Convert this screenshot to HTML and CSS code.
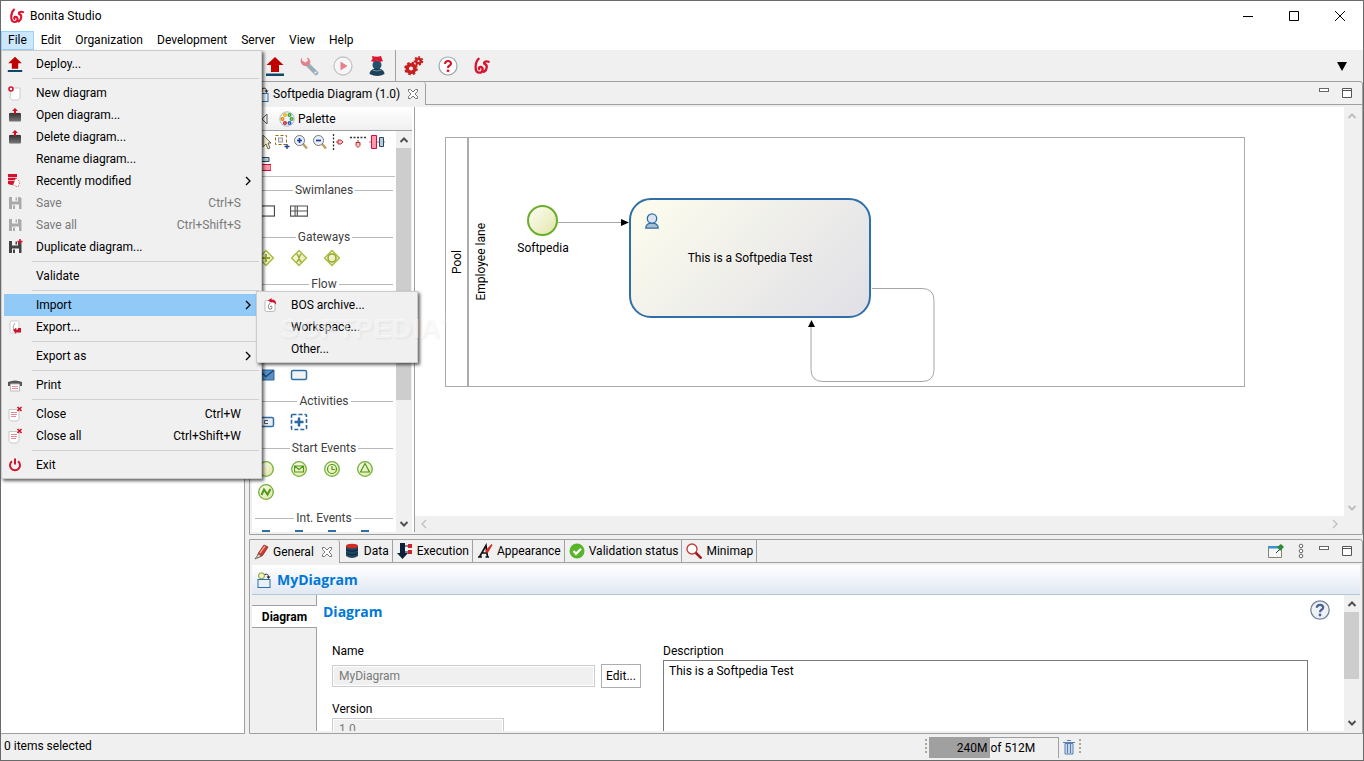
FILE: index.html
```html
<!DOCTYPE html>
<html lang="en">
<head>
    <meta charset="UTF-8">
    <meta name="viewport" content="width=device-width, initial-scale=1.0">
    <title>Bonita Studio</title>
    <link rel="stylesheet" href="styles.css">
</head>
<body>

<!-- Shared icons -->
<svg class="defs" width="0" height="0" aria-hidden="true">
    <defs>
        <linearGradient id="green" x1="0" y1="0" x2="1" y2="1"><stop offset="0" stop-color="#fdfef2"/><stop offset="1" stop-color="#dfe5a0"/></linearGradient>
        <linearGradient id="dark" x1="0" y1="0" x2="0" y2="1"><stop offset="0" stop-color="#333"/><stop offset="1" stop-color="#777"/></linearGradient>
    </defs>
    <symbol id="logo" viewBox="0 0 16 16"><path d="M5 1.500C1.500 5 1 14 5.500 14c3.800 0 4-5.200 1-5.200-1.300 0-1.500 1.300-1 2M14 4.200c-2.500-1-5 .3-3.800 1.900 3 .6 2.600 5.200-.4 7.200" fill="none" stroke="#d9122f" stroke-width="2.100" stroke-linecap="round"/></symbol>
    <symbol id="deploy" viewBox="0 0 20 20"><path d="M10 1l8.500 8H14v7H6V9H1.500z" fill="#c00000"/><path d="M1 17.500h18v2.500H1z" fill="#0b4a6b"/></symbol>
    <symbol id="chev" viewBox="0 0 10 10"><path d="M3 1l4 4-4 4" fill="none" stroke="currentColor" stroke-width="1.300"/></symbol>
    <symbol id="up" viewBox="0 0 10 10"><path d="M1.500 7L5 3.500 8.500 7" fill="none" stroke="currentColor" stroke-width="2"/></symbol>
    <symbol id="down" viewBox="0 0 10 10"><path d="M1.500 3L5 6.500 8.500 3" fill="none" stroke="currentColor" stroke-width="2"/></symbol>
    <symbol id="tabclose" viewBox="0 0 12 12"><path d="M1.500 1.500h2L6 4l2.500-2.500h2v2L8 6l2.500 2.500v2h-2L6 8l-2.500 2.500h-2v-2L4 6 1.500 3.500z" fill="#fff" stroke="#777"/></symbol>
    <symbol id="folder" viewBox="0 0 16 16"><path d="M2.500 6.500l1-2h9l1 2v8h-11z" fill="#ddd"/><rect x="2" y="6" width="12" height="8.500" rx="1" fill="url(#dark)"/><path d="M8 1l3 3H9v3H7V4H5z" fill="#d01020"/></symbol>
    <symbol id="floppy" viewBox="0 0 16 16"><path d="M2 2h11l1.500 1.500V14H2z" fill="currentColor"/><path d="M5 2h6v4.500H5zM5 9.500h7V14H5z" fill="#f4f4f4"/><path d="M8.500 2.500h1.500v3H8.500zM6 10.500h2V14H6z" fill="currentColor"/></symbol>
    <symbol id="closedoc" viewBox="0 0 16 16"><path d="M2 3.500h10V13l-2 2H4l-2-2z" fill="#fff" stroke="#c8c8c8"/><path d="M4 6.500h6M4 8.500h6M4 10.500h5" stroke="#e48b97"/><path d="M10.500 1l4 4M14.500 1l-4 4" stroke="#d01020" stroke-width="1.600"/></symbol>
    <symbol id="pool" viewBox="0 0 16 12"><rect x=".5" y="1.500" width="15" height="9" fill="#fff" stroke="#444"/></symbol>
    <symbol id="lane" viewBox="0 0 16 12"><path d="M.5 1.500h15v9H.5zM4.500 1.500v9M6.500 1.500v9M.5 6h15" fill="none" stroke="#555"/></symbol>
    <symbol id="diamond" viewBox="0 0 18 18"><path d="M9 1.500L16.500 9 9 16.500 1.500 9z" fill="url(#green)" stroke="#a9b83c" stroke-width="1.300"/></symbol>
    <symbol id="event" viewBox="0 0 18 18"><circle cx="9" cy="9" r="7.300" fill="url(#green)" stroke="#71b03a" stroke-width="1.300"/></symbol>
    <symbol id="diagram" viewBox="0 0 14 16"><rect x="1" y="7.500" width="12" height="8" fill="#e8f2fb" stroke="#2f6fa8"/><circle cx="4.500" cy="3.800" r="3" fill="#f1f2b8" stroke="#8a9432"/><path d="M7.500 2.500q4-1.500 4 3" fill="none" stroke="#222"/><path d="M9.500 4.500h4l-2 2.500z" fill="#222"/></symbol>
    <symbol id="min" viewBox="0 0 12 12"><rect x="1.500" y="1.500" width="9" height="3" fill="#fff" stroke="#666"/></symbol>
    <symbol id="max" viewBox="0 0 12 12"><path d="M1.500 1.500h9v9h-9zM1.500 3.500h9" fill="#fff" stroke="#555"/></symbol>
</svg>

<!-- Title bar -->
<header class="titlebar">
    <svg class="app-icon"><use href="#logo"/></svg>
    <span class="app-title">Bonita Studio</span>
    <div class="window-buttons">
        <button aria-label="Minimize"><svg viewBox="0 0 12 12"><path d="M1 6.500h10" stroke="#000"/></svg></button>
        <button aria-label="Maximize"><svg viewBox="0 0 12 12"><path d="M1.500 1.500h9v9h-9z" fill="none" stroke="#000"/></svg></button>
        <button aria-label="Close"><svg viewBox="0 0 12 12"><path d="M1 1l10 10M11 1L1 11" stroke="#000"/></svg></button>
    </div>
</header>

<!-- Menu bar -->
<nav class="menubar">
    <button class="open">File</button>
    <button>Edit</button>
    <button>Organization</button>
    <button>Development</button>
    <button>Server</button>
    <button>View</button>
    <button>Help</button>
</nav>

<!-- Toolbar -->
<div class="toolbar">
    <button aria-label="Deploy"><svg viewBox="0 0 20 20"><use href="#deploy"/></svg></button>
    <button aria-label="Configure" class="off"><svg viewBox="0 0 20 20"><path d="M9 9l8 8" stroke="#4b6b85" stroke-width="4.500" stroke-linecap="round"/><path d="M3 1.500A5 5 0 1 0 11.500 6L10 2.500 8 1.500l1 3.500-3 1.500-3-2z" fill="#d8142c"/><circle cx="16.500" cy="16.500" r="1" fill="#fff"/></svg></button>
    <button aria-label="Run" class="off"><svg viewBox="0 0 20 20"><circle cx="10" cy="10" r="9" fill="#fff" stroke="#999" stroke-width="1.300"/><path d="M7.500 5.500v9l7-4.500z" fill="#e0102c"/></svg></button>
    <button aria-label="Portal"><svg viewBox="0 0 20 20"><circle cx="10" cy="9" r="4.500" fill="#24506c"/><path d="M2.500 18q0-4 5-5.500h5q5 1.500 5 5.500-7 4-15 0z" fill="#1c4059"/><path d="M5.500 14q4 2 9 0" stroke="#7090a5" fill="none"/><path d="M5 0q5 1.500 9 0l1 3 1 2-3 1-3-1.500L6.500 6 4 5l1.500-2z" fill="#e0142c"/></svg></button>
    <span class="toolbar-separator"></span>
    <button aria-label="Preferences"><svg viewBox="0 0 20 20"><circle cx="7" cy="12.500" r="3.800" fill="none" stroke="#c81e1e" stroke-width="3.500"/><circle cx="7" cy="12.500" r="5.800" fill="none" stroke="#c81e1e" stroke-width="2" stroke-dasharray="2.500 2.050"/><circle cx="14.500" cy="5" r="2.300" fill="none" stroke="#c81e1e" stroke-width="2.500"/><circle cx="14.500" cy="5" r="4" fill="none" stroke="#c81e1e" stroke-width="1.600" stroke-dasharray="2 1.600"/></svg></button>
    <button aria-label="Help"><svg viewBox="0 0 20 20"><circle cx="10" cy="10" r="9" fill="#fff" stroke="#98a4ae" stroke-width="1.200"/><path d="M7 7.800q.2-2.800 3-2.800t3 2.500q0 1.400-1.700 2.300-1.300.7-1.300 2.200" fill="none" stroke="#d8142c" stroke-width="2.200"/><circle cx="10" cy="14.800" r="1.400" fill="#d8142c"/></svg></button>
    <button aria-label="Bonita"><svg viewBox="-1 -1 18 18"><use href="#logo" width="16" height="16"/></svg></button>
    <button class="toolbar-more" aria-label="More"><svg viewBox="0 0 12 12"><path d="M1 2h10L6 11z"/></svg></button>
</div>

<!-- Workbench -->
<main class="workbench">
    <section class="explorer"></section>

    <div class="parts">
        <section class="part editor">
            <div class="tabs">
                <button class="tab active editor-tab"><svg class="i14"><use href="#diagram"/></svg>Softpedia Diagram (1.0)<svg class="tab-close"><use href="#tabclose"/></svg></button>
                <div class="tab-tools">
                    <button aria-label="Minimize editor"><svg><use href="#min"/></svg></button>
                    <button aria-label="Maximize editor"><svg><use href="#max"/></svg></button>
                </div>
            </div>
            <div class="editor-body">
                <aside class="palette">
                    <div class="palette-header">
                        <svg class="i12" viewBox="0 0 12 12"><path d="M8 1v10L3 6z" fill="#fff" stroke="#555"/></svg>
                        <svg class="i16" viewBox="0 0 16 16"><circle cx="8" cy="8" r="7.200" fill="#eef3fa" stroke="#a9b9d0"/><g fill="#fff" stroke-width="1.400"><circle cx="6" cy="4" r="1.300" stroke="#e8b400"/><circle cx="10.500" cy="4" r="1.300" stroke="#3da32c"/><circle cx="12.500" cy="8" r="1.300" stroke="#3da32c"/><circle cx="10.500" cy="12" r="1.300" stroke="#2858c8"/><circle cx="6" cy="12" r="1.300" stroke="#d02020"/><circle cx="3.500" cy="8" r="1.300" stroke="#e88400"/></g></svg>
                        <span>Palette</span>
                    </div>
                    <div class="palette-main">
                        <div class="palette-items">
                            <div class="palette-tools">
                                <svg class="i16" viewBox="0 0 16 16"><path d="M8 1v12l3-3 2 5 2-1-2-5h3z" fill="#f4f0dc" stroke="#6b6440"/></svg>
                                <svg class="i16" viewBox="0 0 16 16"><rect x="1.500" y="1.500" width="11" height="9" fill="none" stroke="#8a6d1a" stroke-dasharray="3 2"/><rect x="4.500" y="4" width="4" height="4" fill="#eee" stroke="#999"/><path d="M13 10v5M10.500 12.500h5" stroke="#1d3f86" stroke-width="1.300"/></svg>
                                <svg class="i16" viewBox="0 0 16 16"><path d="M10 10l4 4.500" stroke="#c0a060" stroke-width="2.500"/><circle cx="6.500" cy="6.500" r="5" fill="#eaf2ff" stroke="#777"/><path d="M4 6.500h5M6.500 4v5" stroke="#1c3c9c" stroke-width="1.700"/></svg>
                                <svg class="i16" viewBox="0 0 16 16"><path d="M10 10l4 4.500" stroke="#c0a060" stroke-width="2.500"/><circle cx="6.500" cy="6.500" r="5" fill="#eaf2ff" stroke="#777"/><path d="M4 6.500h5" stroke="#1c3c9c" stroke-width="1.700"/></svg>
                                <svg class="i16" viewBox="0 0 16 16"><path d="M2.500 0v16" stroke="#333" stroke-width="1.300" stroke-dasharray="2 1.500"/><path d="M5 8h2M7 6h3l2 2-2 2H7z" fill="#f6c4c4" stroke="#b83030"/></svg>
                                <svg class="i16" viewBox="0 0 16 16"><path d="M0 3.500h16" stroke="#333" stroke-width="1.300" stroke-dasharray="2 1.500"/><path d="M8 6v2M6 8.500h4v3l-2 2-2-2z" fill="#f6c4c4" stroke="#b83030"/></svg>
                                <svg class="i16" viewBox="0 0 16 16"><path d="M0 8h16" stroke="#888"/><path d="M2.500 1.500h5v13h-5z" fill="#ff98aa" stroke="#d0103c"/><path d="M10.500 3.500h4v9h-4z" fill="#bcd" stroke="#234a5e"/></svg>
                                <svg class="i16" viewBox="0 0 16 16"><path d="M6 1.500h8v4H6z" fill="#bcd" stroke="#234a5e"/><path d="M4 8.500h12v6H4z" fill="#ff98aa" stroke="#d0103c"/></svg>
                            </div>
                            <h3>Swimlanes</h3>
                            <div class="drawer"><svg><use href="#pool"/></svg><svg><use href="#lane"/></svg></div>
                            <h3>Gateways</h3>
                            <div class="drawer">
                                <svg viewBox="0 0 18 18"><use href="#diamond"/><path d="M9 5v8M5 9h8" stroke="#94a826" stroke-width="1.800"/></svg>
                                <svg viewBox="0 0 18 18"><use href="#diamond"/><path d="M6.500 5.500h1l3 7h1M11.500 5.500h-1l-3 7h-1" fill="none" stroke="#94a826" stroke-width="1.300"/></svg>
                                <svg viewBox="0 0 18 18"><use href="#diamond"/><circle cx="9" cy="9" r="4" fill="none" stroke="#94a826" stroke-width="1.500"/></svg>
                            </div>
                            <h3>Flow</h3>
                            <div class="drawer"></div>
                            <h3>Tasks</h3>
                            <div class="drawer"></div>
                            <div class="drawer">
                                <svg viewBox="0 0 18 18"><path d="M1 4h16v10H1z" fill="#5b8fc4" stroke="#2b66a0"/><path d="M1.500 4.500l7.500 6 7.500-6" fill="none" stroke="#174d80" stroke-width="1.500"/></svg>
                                <svg viewBox="0 0 18 18"><rect x="1.500" y="4.500" width="15" height="9" rx="1.500" fill="#f2f4f4" stroke="#2f6fa8" stroke-width="1.500"/></svg>
                            </div>
                            <h3>Activities</h3>
                            <div class="drawer">
                                <svg viewBox="0 0 18 18"><rect x="1.500" y="4.500" width="15" height="9" rx="1.500" fill="#e8edf2" stroke="#2f6fa8" stroke-width="1.500"/><path d="M11 7.500H7.500v3H11" fill="none" stroke="#456"/></svg>
                                <svg viewBox="0 0 18 18"><rect x="1.500" y="1.500" width="15" height="15" rx="1" fill="none" stroke="#2b66a0" stroke-width="1.600" stroke-dasharray="4 2"/><path d="M9 4.500v9M4.500 9h9" stroke="#2b66a0" stroke-width="2.500"/></svg>
                            </div>
                            <h3>Start Events</h3>
                            <div class="drawer">
                                <svg><use href="#event"/></svg>
                                <svg viewBox="0 0 18 18"><use href="#event"/><path d="M4.500 6h9v6h-9zl4.500 3.500L13.500 6" fill="none" stroke="#4d9a1a" stroke-width="1.100"/></svg>
                                <svg viewBox="0 0 18 18"><use href="#event"/><circle cx="9" cy="9" r="4.500" fill="none" stroke="#4d9a1a" stroke-width="1.200"/><path d="M9 6v3.500h3" fill="none" stroke="#4d9a1a" stroke-width="1.200"/></svg>
                                <svg viewBox="0 0 18 18"><use href="#event"/><path d="M9 3.500l4.500 8.500h-9z" fill="none" stroke="#4d9a1a" stroke-width="1.200"/></svg>
                            </div>
                            <div class="drawer"><svg viewBox="0 0 18 18"><use href="#event"/><path d="M4.500 12L7 6.500l3.500 5 3-5.500" fill="none" stroke="#4d9a1a" stroke-width="2"/></svg></div>
                            <h3>Int. Events</h3>
                            <div class="drawer clipped">
                                <i></i><i></i><i></i><i></i>
                            </div>
                        </div>
                        <div class="scrollbar">
                            <svg><use href="#up"/></svg>
                            <div class="thumb palette-thumb"></div>
                            <svg><use href="#down"/></svg>
                        </div>
                    </div>
                </aside>

                <div class="canvas-area">
                    <div class="canvas">
                        <div class="pool">
                            <div class="pool-name"><span>Pool</span></div>
                            <div class="lane-name"><span>Employee lane</span></div>
                        </div>
                        <svg class="flows" viewBox="0 0 600 300">
                            <path d="M143 115.500h65M457 181.500h50q12 0 12 12v69q0 12-12 12H408q-12 0-12-12v-45" fill="none" stroke="#a6a6a6"/>
                            <path d="M206 112l8 3.500-8 3.500zM393 220l3.500-7 3.500 7z" fill="#000"/>
                        </svg>
                        <div class="start-event"></div>
                        <div class="start-label">Softpedia</div>
                        <div class="task">
                            <svg viewBox="0 0 14 16"><path d="M.8 15.200q0-5 6.200-5t6.200 5z" fill="#a9bfd0" stroke="#2f6fa8" stroke-width="1.300"/><circle cx="7" cy="5.500" r="4.700" fill="#dde3f2" stroke="#2f6fa8" stroke-width="1.300"/></svg>
                            <span>This is a Softpedia Test</span>
                        </div>
                    </div>
                    <div class="scrollbar disabled">
                        <svg><use href="#up"/></svg>
                        <svg><use href="#down"/></svg>
                    </div>
                    <div class="scrollbar horizontal disabled">
                        <svg class="flip"><use href="#chev"/></svg>
                        <svg><use href="#chev"/></svg>
                    </div>
                </div>
            </div>
        </section>

        <section class="part properties">
            <div class="tabs">
                <button class="tab active"><svg class="i16" viewBox="0 0 16 16"><path d="M4 14L5.500 9 11 1l4 2L9.500 11.500z" fill="#cc3a2c" stroke="#8a1c14" stroke-width=".8"/><path d="M7 9L12 2" stroke="#f4978c" stroke-width="1.500"/><path d="M2 15l3.500-5 3 2z" fill="#f0dcc0" stroke="#444" stroke-width=".7"/></svg>General<svg class="tab-close"><use href="#tabclose"/></svg></button>
                <button class="tab"><svg class="i16" viewBox="0 0 16 16"><path d="M2 3v10q6 4 12 0V3z" fill="#1f4660"/><ellipse cx="8" cy="3" rx="6" ry="2.300" fill="#d42a24"/><path d="M2 6.500q6 3.500 12 0M2 10q6 3.500 12 0" fill="none" stroke="#0b2639"/></svg>Data</button>
                <button class="tab"><svg class="i16" viewBox="0 0 16 16"><path d="M3 0h5v10h3l-5.500 6L0 10h3z" fill="#0b2038"/><path d="M8 3h4M8 9h4" stroke="#0b2038"/><path d="M11 1h4v4h-4zM11 7h4v4h-4z" fill="#d0202c"/></svg>Execution</button>
                <button class="tab"><svg class="i16" viewBox="0 0 16 16"><path d="M1 14h4M2.500 14L9 2.500l1.500 11.500M5 10h5M8.500 14H12" fill="none" stroke="#111" stroke-width="1.700"/><path d="M8 8l2.500 2.500L15.500 2l-1-1z" fill="#d02c24"/></svg>Appearance</button>
                <button class="tab"><svg class="i16" viewBox="0 0 16 16"><circle cx="8" cy="8" r="7.500" fill="#58b52a"/><path d="M4.500 8l2.500 2.800 5-5" fill="none" stroke="#fff" stroke-width="2.300"/></svg>Validation status</button>
                <button class="tab"><svg class="i16" viewBox="0 0 16 16"><path d="M9.500 9.500l6 6" stroke="#a01c1c" stroke-width="2.500"/><circle cx="6" cy="6" r="5" fill="#fff" stroke="#c03a34" stroke-width="1.300"/></svg>Minimap</button>
                <div class="tab-tools">
                    <button class="pin" aria-label="Pin"><svg viewBox="0 0 16 16"><path d="M.5 3.500h13v11H.5z" fill="#f4f8fb" stroke="#8c8468"/><path d="M0 3h10v2.500H0z" fill="#3f8fd4"/><path d="M8 10l4-4" stroke="#333"/><path d="M9 4l4-3 3 3-3 3-1 1z" fill="#2a8c34"/></svg></button>
                    <button class="view-menu" aria-label="View menu"><svg viewBox="0 0 12 16"><g fill="#fff" stroke="#666"><circle cx="6" cy="3" r="1.800"/><circle cx="6" cy="8" r="1.800"/><circle cx="6" cy="13" r="1.800"/></g></svg></button>
                    <button aria-label="Minimize properties"><svg><use href="#min"/></svg></button>
                    <button aria-label="Maximize properties"><svg><use href="#max"/></svg></button>
                </div>
            </div>
            <div class="properties-body">
                <h1><svg class="i14"><use href="#diagram"/></svg>MyDiagram</h1>
                <div class="properties-main">
                    <div class="side-tabs">
                        <button>Diagram</button>
                    </div>
                    <form class="properties-form">
                        <h2>Diagram</h2>
                        <div class="fields">
                            <div class="left-fields">
                                <label for="name">Name</label>
                                <div class="name-row">
                                    <input type="text" id="name" value="MyDiagram" disabled>
                                    <button type="button">Edit...</button>
                                </div>
                                <label for="version">Version</label>
                                <input type="text" id="version" value="1.0" disabled>
                            </div>
                            <div class="description">
                                <label for="description">Description</label>
                                <textarea id="description">This is a Softpedia Test</textarea>
                            </div>
                        </div>
                        <button type="button" class="help" aria-label="Help"><svg viewBox="0 0 20 20"><circle cx="10" cy="10" r="9.200" fill="#eef1f6" stroke="#76829a" stroke-width="1.300"/><path d="M6.800 7.800q.2-3 3.200-3t3.200 2.600q0 1.300-1.700 2.300-1.500.8-1.500 2.500" fill="none" stroke="#4a6294" stroke-width="2.200"/><circle cx="10" cy="15" r="1.400" fill="#4a6294"/></svg></button>
                    </form>
                    <div class="scrollbar">
                        <svg><use href="#up"/></svg>
                        <div class="thumb form-thumb"></div>
                        <svg><use href="#down"/></svg>
                    </div>
                </div>
            </div>
        </section>
    </div>
</main>

<!-- Status bar -->
<footer class="statusbar">
    <span>0 items selected</span>
    <div class="heap">
        <span class="grip"></span>
        <div class="heap-bar"><span>240M of 512M</span></div>
        <button aria-label="Run garbage collector"><svg viewBox="0 0 12 16"><path d="M2 4.500h8V15H2z" fill="#cfe0f4" stroke="#5a7fb0"/><path d="M0 3.500h12M4 1.500h4M4.500 5v9M7.500 5v9" stroke="#5a7fb0" stroke-width="1.200"/></svg></button>
        <span class="grip"></span>
    </div>
</footer>

<!-- File menu -->
<div class="menu file-menu">
    <button><svg><use href="#deploy"/></svg>Deploy...</button>
    <hr>
    <button><svg viewBox="0 0 16 16"><path d="M4 3h9v10l-1.500 2H5L3 13z" fill="#fff" stroke="#ccc"/><circle cx="4" cy="4" r="2" fill="#fff" stroke="#d8142c" stroke-width="1.600"/></svg>New diagram</button>
    <button><svg><use href="#folder"/></svg>Open diagram...</button>
    <button><svg><use href="#folder"/></svg>Delete diagram...</button>
    <button>Rename diagram...</button>
    <button><svg viewBox="0 0 16 16"><path d="M1 1h9v10q-4 2-9 0z" fill="#d0142c"/><path d="M1 4.500h9M1 7.500h9" stroke="#f4b0b8"/><path d="M9 5l4 4-2 5-5-2" fill="#fff" stroke="#e08090" stroke-dasharray="2 1"/></svg>Recently modified<svg class="arrow"><use href="#chev"/></svg></button>
    <button disabled><svg><use href="#floppy"/></svg>Save<kbd>Ctrl+S</kbd></button>
    <button disabled><svg><use href="#floppy"/></svg>Save all<kbd>Ctrl+Shift+S</kbd></button>
    <button><svg class="duplicate" viewBox="0 0 16 16"><use href="#floppy"/><path d="M13 0v5M10.500 2.500h5" stroke="#d8142c" stroke-width="1.500"/></svg>Duplicate diagram...</button>
    <hr>
    <button>Validate</button>
    <hr>
    <button class="selected">Import<svg class="arrow"><use href="#chev"/></svg></button>
    <button><svg viewBox="0 0 16 16"><rect x="3" y="2" width="9" height="12" rx="1.500" fill="#fff" stroke="#ccc"/><path d="M8 4q-3 3-1.500 6t3-1" fill="none" stroke="#aaa"/><path d="M6 11l3-2v1.500h2V9h3v4.500H9V15z" fill="#d0142c"/></svg>Export...</button>
    <hr>
    <button>Export as<svg class="arrow"><use href="#chev"/></svg></button>
    <hr>
    <button><svg viewBox="0 0 16 16"><path d="M1 5q7-3 14 0v4H1z" fill="#555"/><path d="M3.500 7h9v7h-9z" fill="#fff" stroke="#bbb"/><path d="M5 9.500h6M5 11.500h6" stroke="#e48b97"/></svg>Print</button>
    <hr>
    <button><svg><use href="#closedoc"/></svg>Close<kbd>Ctrl+W</kbd></button>
    <button><svg><use href="#closedoc"/></svg>Close all<kbd>Ctrl+Shift+W</kbd></button>
    <hr>
    <button><svg viewBox="0 0 16 16"><path d="M5 4.200a5 5 0 1 0 6 0" fill="none" stroke="#d0142c" stroke-width="2"/><path d="M8 1.500v6" stroke="#d0142c" stroke-width="2"/></svg>Exit</button>
</div>

<!-- Import submenu -->
<div class="menu import-menu">
    <button><svg viewBox="0 0 16 16"><rect x="3" y="3.500" width="10" height="11" rx="1.500" fill="#fff" stroke="#bbb"/><path d="M8 6q-3 3-1 6 3 1 3-1.500t-2-1" fill="none" stroke="#888"/><path d="M6 3.500L9.500 1v1.500q5 0 4.500 5-1.500-2.500-4.500-2.500V6z" fill="#d0142c"/></svg>BOS archive...</button>
    <button>Workspace...</button>
    <button>Other...</button>
</div>
<div class="watermark">SOFTPEDIA<sup>®</sup></div>

</body>
</html>
```
FILE: styles.css
```css
* {
    box-sizing: border-box;
}

body {
    font-family: Roboto, 'Open Sans', sans-serif;
    font-size: 12px;
    line-height: 16px;
    margin: 0;
    height: 100vh;
    display: flex;
    flex-direction: column;
    position: relative;
    overflow: hidden;
    border: 1px solid #6a6a6a;
    background-color: #f0f0f0;
    color: #000;
}

button {
    font: inherit;
    color: inherit;
    border: none;
    background: none;
    padding: 0;
    white-space: nowrap;
}

input, textarea {
    font: inherit;
}

svg {
    display: block;
    flex: none;
}

.defs {
    position: absolute;
}

.i12 {
    width: 12px;
    height: 12px;
}

.i14 {
    width: 14px;
    height: 16px;
}

.i16 {
    width: 16px;
    height: 16px;
}

/* Title bar */
.titlebar {
    display: flex;
    align-items: center;
    height: 30px;
    flex: none;
    background-color: #fff;
    padding-left: 8px;
}

.app-icon {
    width: 16px;
    height: 16px;
    margin-right: 5px;
}

.window-buttons {
    display: flex;
    margin-left: auto;
}

.window-buttons button {
    width: 46px;
    height: 30px;
    display: flex;
    align-items: center;
    justify-content: center;
}

.window-buttons svg {
    width: 12px;
    height: 12px;
}

/* Menu bar */
.menubar {
    display: flex;
    flex: none;
    background-color: #fff;
}

.menubar button {
    height: 19px;
    padding: 0 7px;
    line-height: 19px;
}

.menubar .open {
    background-color: #cce8ff;
    box-shadow: inset 0 0 0 1px #99d1ff;
}

/* Toolbar */
.toolbar {
    display: flex;
    align-items: center;
    height: 31px;
    flex: none;
    padding-left: 257px;
}

.toolbar button {
    width: 34px;
    height: 30px;
    display: flex;
    align-items: center;
    justify-content: center;
}

.toolbar svg {
    width: 20px;
    height: 20px;
}

.toolbar .off {
    opacity: 0.5;
}

.toolbar-separator {
    width: 1px;
    height: 31px;
    margin: 0 1px;
    background-color: #a0a0a0;
}

.toolbar .toolbar-more {
    margin-left: auto;
    margin-right: 4px;
}

.toolbar-more svg {
    width: 12px;
    height: 12px;
}

/* Workbench */
.workbench {
    flex: 1;
    min-height: 0;
    display: flex;
    gap: 4px;
}

.explorer {
    width: 244px;
    flex: none;
    background-color: #fff;
    border: 1px solid #a0a0a0;
    border-left: none;
}

.parts {
    flex: 1;
    min-width: 0;
    display: flex;
    flex-direction: column;
    gap: 4px;
}

.part {
    display: flex;
    flex-direction: column;
    border: 1px solid #a0a0a0;
    border-radius: 0 3px 0 0;
    min-height: 0;
}

.editor {
    flex: 1;
}

.properties {
    height: 195px;
    flex: none;
}

.tabs {
    display: flex;
    height: 23px;
    flex: none;
}

.tab {
    display: flex;
    align-items: center;
    gap: 4px;
    padding: 0 3px 0 4px;
    border-right: 1px solid #a0a0a0;
    border-bottom: 1px solid #a0a0a0;
}

.tab.active {
    border-bottom: none;
    border-radius: 0 3px 0 0;
    padding-left: 3px;
    padding-right: 6px;
}

.tab.editor-tab {
    padding-left: 5px;
}

.tab-close {
    width: 12px;
    height: 12px;
    margin-left: 3px;
}

.tab-tools {
    flex: 1;
    display: flex;
    justify-content: flex-end;
    align-items: center;
    gap: 11px;
    padding-right: 9px;
    border-bottom: 1px solid #a0a0a0;
}

.tab-tools svg {
    width: 12px;
    height: 12px;
}

.tab-tools .pin svg {
    width: 16px;
    height: 16px;
}

.tab-tools .view-menu svg {
    height: 16px;
}

/* Scrollbars */
.scrollbar {
    width: 16px;
    flex: none;
    display: flex;
    flex-direction: column;
    align-items: center;
    padding: 4px 1px 3px 0;
    background-color: #f0f0f0;
    color: #505050;
}

.scrollbar svg {
    width: 10px;
    height: 10px;
}

.scrollbar svg:last-child {
    margin-top: auto;
}

.scrollbar.disabled {
    color: #bfbfbf;
}

.thumb {
    width: 15px;
    background-color: #cdcdcd;
    margin-top: 3px;
}

.palette-thumb {
    height: 64%;
}

.form-thumb {
    height: 52%;
}

.scrollbar.horizontal {
    width: auto;
    height: 16px;
    flex-direction: row;
    justify-content: space-between;
    padding: 0 4px;
}

.scrollbar.horizontal svg {
    margin: 0;
}

.flip {
    transform: scaleX(-1);
}

/* Editor */
.editor-body {
    flex: 1;
    min-height: 0;
    display: flex;
    padding: 2px;
}

.palette {
    width: 163px;
    flex: none;
    display: flex;
    flex-direction: column;
    background-color: #fff;
    border-right: 1px solid #a0a0a0;
    padding-right: 2px;
}

.palette-header {
    display: flex;
    align-items: center;
    gap: 8px;
    height: 24px;
    flex: none;
    padding-left: 7px;
    border-bottom: 1px solid #a0a0a0;
    background: linear-gradient(#fff, #f0f0f0);
}

.palette-header span {
    margin-left: -5px;
}

.palette-main {
    flex: 1;
    min-height: 0;
    display: flex;
}

.palette-items {
    flex: 1;
    overflow: hidden;
    padding-left: 3px;
}

.palette-tools {
    display: flex;
    flex-wrap: wrap;
    align-content: flex-start;
    gap: 6px 3px;
    height: 46px;
    padding-top: 3px;
    border-bottom: 1px solid #c0c0c0;
    margin: 0 1px 1px 0;
}

.palette h3 {
    display: flex;
    align-items: center;
    height: 24px;
    margin: 0 3px 0 0;
    font-size: 12px;
    font-weight: normal;
    color: #404040;
}

.palette h3::before,
.palette h3::after {
    content: "";
    flex: 1;
    height: 1px;
    background-color: #b8b8b8;
    margin: 0 2px;
}

.palette h3::before {
    margin-left: 0;
}

.palette h3::after {
    margin-right: 0;
}

.drawer {
    display: flex;
    gap: 15px;
    height: 23px;
    padding-left: 2px;
}

.drawer svg {
    width: 18px;
    height: 18px;
}

.drawer.clipped {
    padding-left: 7px;
    gap: 25px;
}

.drawer i {
    width: 8px;
    height: 8px;
    border-top: 2px solid #2f6fa8;
}

.canvas-area {
    flex: 1;
    display: grid;
    grid-template-columns: 1fr 16px;
    grid-template-rows: 1fr 16px;
}

.canvas {
    position: relative;
    overflow: hidden;
    background-color: #fff;
}

/* Diagram nodes, placed on the free canvas */
.pool {
    position: absolute;
    left: 30px;
    top: 30px;
    width: 800px;
    height: 250px;
    display: flex;
    border: 1px solid #ababab;
}

.pool-name,
.lane-name {
    width: 23px;
    display: flex;
    align-items: center;
    justify-content: center;
    border-right: 2px solid #ababab;
}

.lane-name {
    border-right: none;
}

.pool span {
    writing-mode: vertical-rl;
    transform: rotate(180deg);
}

.flows {
    position: absolute;
    left: 0;
    top: 0;
    width: 600px;
    height: 300px;
}

.start-event {
    position: absolute;
    left: 112px;
    top: 98px;
    width: 31px;
    height: 31px;
    border: 2px solid #6aae2c;
    border-radius: 50%;
    background: linear-gradient(135deg, #fdfef5, #e2e6a8);
}

.start-label {
    position: absolute;
    left: 88px;
    top: 133px;
    width: 80px;
    text-align: center;
}

.task {
    position: absolute;
    left: 214px;
    top: 91px;
    width: 242px;
    height: 120px;
    display: flex;
    align-items: center;
    justify-content: center;
    border: 2px solid #2f6fa8;
    border-radius: 22px;
    background: linear-gradient(135deg, #fdfdee, #e0dfe6);
}

.task svg {
    position: absolute;
    left: 14px;
    top: 13px;
    width: 14px;
    height: 16px;
}

/* Properties view */
.properties-body {
    flex: 1;
    min-height: 0;
    display: flex;
    flex-direction: column;
    padding: 2px;
}

h1, h2 {
    font-family: 'Open Sans', sans-serif;
    font-size: 14px;
    line-height: 18px;
    color: #0078d7;
    margin: 0;
}

h1 {
    display: flex;
    align-items: center;
    gap: 6px;
    height: 30px;
    flex: none;
    padding-left: 5px;
    border-bottom: 1px solid #b4c8dc;
    background: linear-gradient(#fff, #e1e8f3);
}

.properties-main {
    flex: 1;
    min-height: 0;
    display: flex;
    background-color: #fff;
}

.side-tabs {
    width: 65px;
    flex: none;
    background-color: #f0f0f0;
    border-right: 1px solid #a0a0a0;
    padding-top: 10px;
}

.side-tabs button {
    width: 65px;
    height: 23px;
    background-color: #fff;
    border-top: 1px solid #a0a0a0;
    border-bottom: 1px solid #a0a0a0;
    font-weight: bold;
}

.properties-form {
    flex: 1;
    position: relative;
    overflow: hidden;
    padding: 8px 36px 0 6px;
}

.fields {
    display: flex;
    gap: 22px;
    padding: 22px 0 0 9px;
}

label {
    display: block;
}

.left-fields {
    width: 309px;
    flex: none;
}

.name-row {
    display: flex;
    gap: 6px;
    height: 24px;
    margin: 5px 0 13px;
}

.properties input {
    height: 22px;
    border: 1px solid #ccc;
    box-shadow: inset 0 0 0 1px #fff;
    background-color: #f0f0f0;
    color: #7a7a7a;
    padding: 0 6px;
}

.name-row input {
    flex: 1;
    min-width: 0;
    margin-top: 1px;
}

.name-row button {
    width: 40px;
    border: 1px solid #adadad;
    background-color: #fff;
}

#version {
    display: block;
    width: 172px;
    margin-top: 1px;
}

.description {
    flex: 1;
    display: flex;
    flex-direction: column;
}

.description textarea {
    height: 100px;
    margin-top: 1px;
    border: 1px solid #7a7a7a;
    padding: 2px 5px;
    resize: none;
    background-color: #fff;
    color: #000;
    overflow: hidden;
}

.help {
    position: absolute;
    right: 14px;
    top: 5px;
}

.help svg {
    width: 20px;
    height: 20px;
}

/* Status bar */
.statusbar {
    display: flex;
    align-items: center;
    justify-content: space-between;
    height: 26px;
    flex: none;
    padding: 0 282px 3px 3px;
}

.heap {
    display: flex;
    align-items: center;
    gap: 2px;
    padding-top: 3px;
}

.grip {
    width: 2px;
    height: 16px;
    background: repeating-linear-gradient(#a8a698 0 2px, #f0f0f0 2px 4px);
}

.heap-bar {
    width: 130px;
    height: 21px;
    line-height: 20px;
    padding-left: 5px;
    text-align: center;
    border: 1px solid #a0a0a0;
    border-left: none;
    border-bottom: none;
    background: linear-gradient(90deg, #a0a0a0 61px, #f0f0f0 61px);
}

.heap svg {
    width: 12px;
    height: 16px;
    margin: 0 2px;
}

/* Menus */
.menu {
    position: absolute;
    display: flex;
    flex-direction: column;
    background-color: #f0f0f0;
    border: 1px solid #ccc;
    padding: 2px;
    box-shadow: 2px 2px 3px rgba(0, 0, 0, 0.6);
}

.file-menu {
    left: 0;
    top: 49px;
    width: 261px;
}

.import-menu {
    left: 255px;
    top: 290px;
    width: 162px;
}

.menu button {
    position: relative;
    display: flex;
    align-items: center;
    height: 22px;
    padding-left: 32px;
    text-align: left;
}

.menu button > svg {
    position: absolute;
    left: 3px;
    width: 16px;
    height: 16px;
}

.menu button > .arrow {
    left: auto;
    right: 6px;
    width: 10px;
    height: 10px;
}

.menu button:disabled {
    color: #7a7a7a;
}

.menu button:disabled svg {
    color: #aaa;
}

.menu .duplicate {
    color: #444;
}

.menu .selected {
    background-color: #91c9f7;
}

.menu kbd {
    font: inherit;
    margin-left: auto;
    margin-right: 18px;
}

.menu hr {
    width: 227px;
    height: 1px;
    margin: 3px 0 3px auto;
    border: none;
    background-color: #d0d0d0;
}

.watermark {
    position: absolute;
    left: 279px;
    top: 312px;
    font-family: 'Liberation Sans', sans-serif;
    font-size: 28px;
    line-height: 32px;
    font-weight: bold;
    color: rgba(255, 255, 255, 0.5);
    text-shadow: 1px 1px 2px rgba(0, 0, 0, 0.06);
    pointer-events: none;
}

.watermark sup {
    font-size: 8px;
    line-height: 8px;
    vertical-align: 14px;
}
```
